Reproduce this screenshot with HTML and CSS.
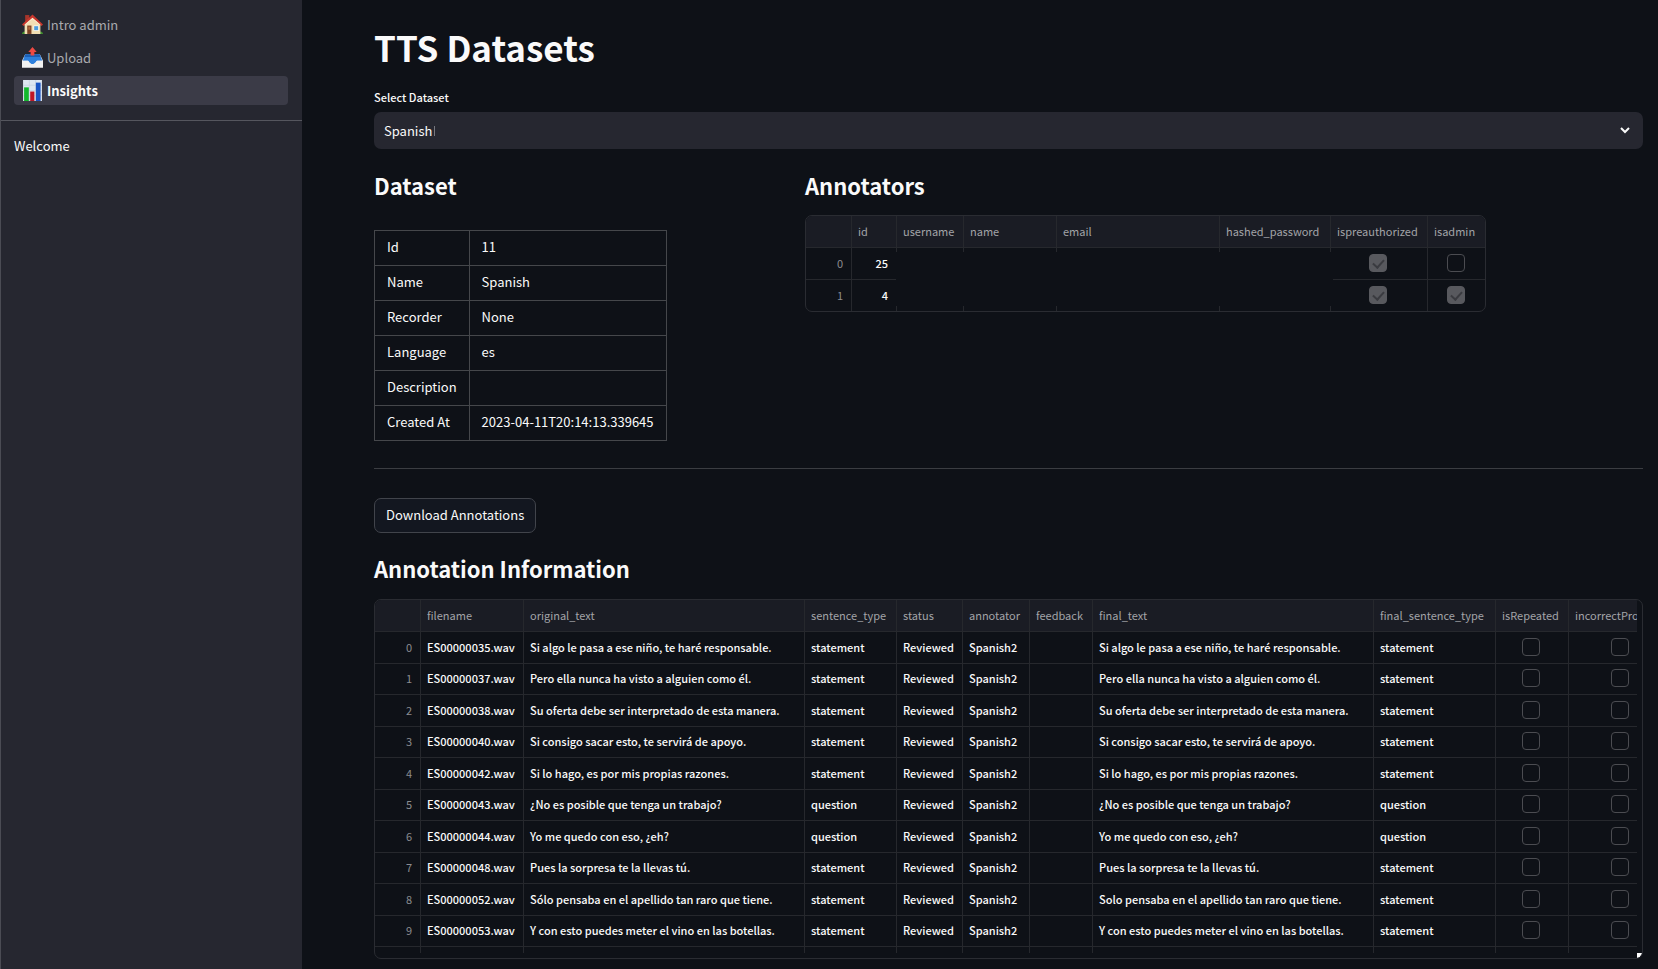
FILE: index.html
```html
<!DOCTYPE html>
<html lang="en">
  <head>
    <meta charset="UTF-8" />
    <meta name="viewport" content="width=device-width, initial-scale=1.0" />
    <title>TTS Datasets</title>
    <link rel="stylesheet" href="styles.css">
  </head>

  <body>
    <div class="app">
      <aside class="sidebar">
        <nav class="nav">
          <a class="nav-link" href="#intro">
            <svg class="nav-icon" viewBox="0 0 20 20">
              <path d="M0 19c0-2 2-3 4-2h12c2-1 4 0 4 2z" fill="#3f8f2e" />
              <path d="M3 1h4v7H3z" fill="#a5352b" />
              <path d="M2.500 9.500 10 2.500l7.500 7V19h-15z" fill="#f2dfb4" />
              <path d="M10 .5 0 10l1.500 1.500L10 4l8.500 7.500L20 10z" fill="#c8372d" />
              <path d="M10 3.500 2.500 10v1L10 4.800l7.500 6.200v-1z" fill="#fff3d6" />
              <path d="M5 11h4v8H5z" fill="#7b3f22" />
              <path d="M6 12h2v3H6z" fill="#b26b3f" />
              <path d="M11 11h5v5h-5z" fill="#fff" />
              <path d="M11.600 11.600h3.800v3.800h-3.800z" fill="#4d9ddb" />
            </svg>
            <span>Intro admin</span>
          </a>
          <a class="nav-link" href="#upload">
            <svg class="nav-icon" viewBox="0 0 20 20">
              <path d="M3 7h14l3 6v6.500H0V13z" fill="#e9eaec" />
              <path d="M3.200 7h13.600l2.500 6h-5c-.8 0-1.300 3.200-4.300 3.200S6.500 13 5.700 13h-5z" fill="#2f80dc" />
              <path d="M3.200 7h13.600l1 2.500H2.200z" fill="#1c5fb5" />
              <path d="M0 13h5.700c.8 0 1.300 3.200 4.300 3.200s3.500-3.200 4.300-3.200H20v6.500H0z" fill="#f1f1f1" />
              <path d="M10 0l4 4.800h-2.200V8H8.200V4.800H6z" fill="#f04a44" />
            </svg>
            <span>Upload</span>
          </a>
          <a class="nav-link active" href="#insights">
            <svg class="nav-icon" viewBox="0 0 20 20">
              <path d="M1 0h18v20H1z" fill="#dfe7f1" />
              <path d="M1 5h18M1 10h18M1 15h18M7 0v20M13 0v20" stroke="#c3cfde" stroke-width=".6" />
              <path d="M2 7h4.500v13H2z" fill="#12b82c" />
              <path d="M7.800 11h4v9h-4z" fill="#c01626" />
              <path d="M13.200 2.500h4.500V20h-4.500z" fill="#1b55c4" />
            </svg>
            <span>Insights</span>
          </a>
        </nav>
        <p class="welcome">Welcome</p>
      </aside>

      <main class="main">
        <h1>TTS Datasets</h1>

        <label class="select-label" for="dataset">Select Dataset</label>
        <div class="select-box">
          <select id="dataset">
            <option>Spanish</option>
          </select>
          <span class="caret"></span>
          <svg class="chevron" viewBox="0 0 12 12">
            <path d="M2 4l4 4 4-4" fill="none" stroke="#fafafa" stroke-width="2" />
          </svg>
        </div>

        <div class="columns">
          <section>
            <h3>Dataset</h3>
            <table class="info">
              <tr><td>Id</td><td>11</td></tr>
              <tr><td>Name</td><td>Spanish</td></tr>
              <tr><td>Recorder</td><td>None</td></tr>
              <tr><td>Language</td><td>es</td></tr>
              <tr><td>Description</td><td></td></tr>
              <tr><td>Created At</td><td>2023-04-11T20:14:13.339645</td></tr>
            </table>
          </section>

          <section>
            <h3>Annotators</h3>
            <div class="frame frame-fit">
              <table class="grid annotators">
                <colgroup>
                  <col class="c-index"><col class="c-id"><col class="c-username"><col class="c-name">
                  <col class="c-email"><col class="c-password"><col class="c-preauth"><col class="c-admin">
                </colgroup>
                <thead>
                  <tr>
                    <th></th><th>id</th><th>username</th><th>name</th><th>email</th>
                    <th>hashed_password</th><th>ispreauthorized</th><th>isadmin</th>
                  </tr>
                </thead>
                <tbody>
                  <tr>
                    <td class="index">0</td><td class="num">25</td><td></td><td></td><td></td><td></td>
                    <td class="check"><input type="checkbox" aria-label="ispreauthorized 0" checked></td>
                    <td class="check"><input type="checkbox" aria-label="isadmin 0"></td>
                  </tr>
                  <tr>
                    <td class="index">1</td><td class="num">4</td><td></td><td></td><td></td><td></td>
                    <td class="check"><input type="checkbox" aria-label="ispreauthorized 1" checked></td>
                    <td class="check"><input type="checkbox" aria-label="isadmin 1" checked></td>
                  </tr>
                </tbody>
              </table>
              <div class="private"></div>
            </div>
          </section>
        </div>

        <hr>

        <button class="download" type="button">Download Annotations</button>

        <h3>Annotation Information</h3>
        <div class="frame frame-scroll">
          <div class="viewport">
            <table class="grid annotations">
              <colgroup>
                <col class="c-index"><col class="c-file"><col class="c-text"><col class="c-type">
                <col class="c-status"><col class="c-annotator"><col class="c-feedback"><col class="c-text">
                <col class="c-final-type"><col class="c-repeated"><col class="c-incorrect">
              </colgroup>
              <thead>
                <tr>
                  <th></th><th>filename</th><th>original_text</th><th>sentence_type</th><th>status</th>
                  <th>annotator</th><th>feedback</th><th>final_text</th><th>final_sentence_type</th>
                  <th>isRepeated</th><th>incorrectPron</th>
                </tr>
              </thead>
              <tbody id="rows"></tbody>
            </table>
          </div>
          <span class="resize"></span>
        </div>
      </main>
    </div>

    <script>
      (function () {
        // file number, original text, type, final text (when it was edited)
        const annotations = [
          ['35', 'Si algo le pasa a ese niño, te haré responsable.', 'statement'],
          ['37', 'Pero ella nunca ha visto a alguien como él.', 'statement'],
          ['38', 'Su oferta debe ser interpretado de esta manera.', 'statement'],
          ['40', 'Si consigo sacar esto, te servirá de apoyo.', 'statement'],
          ['42', 'Si lo hago, es por mis propias razones.', 'statement'],
          ['43', '¿No es posible que tenga un trabajo?', 'question'],
          ['44', 'Yo me quedo con eso, ¿eh?', 'question'],
          ['48', 'Pues la sorpresa te la llevas tú.', 'statement'],
          ['52', 'Sólo pensaba en el apellido tan raro que tiene.', 'statement', 'Solo pensaba en el apellido tan raro que tiene.'],
          ['53', 'Y con esto puedes meter el vino en las botellas.', 'statement'],
        ];

        const rows = annotations.map(([file, text, type, finalText], i) => `
          <tr>
            <td class="index">${i}</td>
            <td>ES000000${file}.wav</td>
            <td>${text}</td>
            <td>${type}</td>
            <td>Reviewed</td>
            <td>Spanish2</td>
            <td></td>
            <td>${finalText || text}</td>
            <td>${type}</td>
            <td class="check"><input type="checkbox" aria-label="isRepeated ${i}"></td>
            <td class="check"><input type="checkbox" aria-label="incorrectPron ${i}"></td>
          </tr>`);

        // next row only peeks in at the bottom of the viewport
        rows.push('<tr>' + '<td></td>'.repeat(11) + '</tr>');
        document.querySelector('#rows').innerHTML = rows.join('');
      })();
    </script>
  </body>
</html>
```

FILE: styles.css
```css
* {
  box-sizing: border-box;
}

body {
  margin: 0;
  background: #0e1117;
  color: #fafafa;
  font-family: "Noto Sans CJK SC", "Noto Sans", sans-serif;
  font-size: 13px;
  font-weight: 400;
  line-height: 20px;
}

.app {
  display: flex;
  min-height: 100vh;
  overflow: hidden;
}

/* sidebar */

.sidebar {
  flex: 0 0 302px;
  background: #262730;
  border-left: 1px solid #4b4c54;
}

.nav {
  display: flex;
  flex-direction: column;
  gap: 4px;
  padding: 10px 14px 15px 13px;
  border-bottom: 1px solid #55565e;
}

.nav-link {
  display: flex;
  align-items: center;
  gap: 4px;
  height: 29px;
  padding: 0 8px;
  border-radius: 4px;
  color: #a9aaae;
  text-decoration: none;
}

.nav-link.active {
  background: #3b3b47;
  color: #fafafa;
  font-weight: 700;
}

.nav-icon {
  width: 21px;
  height: 21px;
}

.welcome {
  margin: 15px 13px;
}

/* main */

.main {
  flex: 1;
  min-width: 0;
  padding: 24px 15px 9px 72px;
}

h1 {
  margin: 0;
  font-size: 35px;
  font-weight: 700;
  line-height: 46px;
}

h3 {
  margin: 0;
  font-size: 22px;
  font-weight: 700;
  line-height: 30px;
}

.select-label {
  display: block;
  margin: 17px 0 5px;
  font-size: 11px;
  font-weight: 500;
}

.select-box {
  position: relative;
}

.select-box select {
  appearance: none;
  display: block;
  width: 100%;
  height: 37px;
  padding: 0 10px;
  border: 0;
  border-radius: 7px;
  background: #262730;
  color: inherit;
  font: inherit;
}

.caret {
  position: absolute;
  left: 60px;
  top: 14px;
  width: 1px;
  height: 10px;
  background: #77787f;
}

.chevron {
  position: absolute;
  right: 12px;
  top: 12px;
  width: 12px;
  height: 12px;
}

.columns {
  display: grid;
  grid-template-columns: 1fr 2fr;
  gap: 12px;
  margin-top: 21px;
}

.info {
  margin-top: 30px;
  border-collapse: collapse;
}

.info td {
  height: 35px;
  padding: 0 12px 2px;
  border: 1px solid #45474b;
}

hr {
  margin: 27px 0 29px;
  border: 0;
  border-top: 1px solid #3b3d42;
}

.download {
  display: block;
  height: 35px;
  margin-bottom: 20px;
  padding: 0 11px 1px;
  border: 1px solid #41444b;
  border-radius: 7px;
  background: #131720;
  color: inherit;
  font: inherit;
}

/* data grids */

.frame {
  position: relative;
  overflow: hidden;
  border: 1px solid #2a2c32;
  border-radius: 7px;
}

.frame-fit {
  width: fit-content;
  margin-top: 15px;
}

.frame-scroll {
  margin-top: 16px;
  padding: 0 5px 5px 0;
}

.viewport {
  height: 353px;
  overflow: hidden;
}

.grid {
  table-layout: fixed;
  border-collapse: separate;
  border-spacing: 0;
  font-size: 11px;
  font-weight: 500;
  white-space: nowrap;
}

.annotators {
  width: 679px;
}

.annotations {
  width: 1297px;
}

.grid th,
.grid td {
  height: 31px;
  padding: 0 6px 2px;
  border-right: 1px solid #26282d;
  border-bottom: 1px solid #26282d;
  line-height: 18px;
  text-align: left;
}

.grid th {
  height: 32px;
  background: #1a1c24;
  color: #a3a4a8;
  font-weight: 400;
}

.grid tr:nth-child(odd) td {
  height: 32px;
}

.grid th:last-child,
.grid td:last-child {
  border-right: 0;
}

.annotators tr:last-child td {
  border-bottom: 0;
}

.grid .index,
.grid .num {
  padding-right: 8px;
  text-align: right;
}

.grid .index {
  color: #8b8c90;
  font-weight: 400;
}

.grid .check {
  padding: 0 2px 2px 0;
}

.check input {
  appearance: none;
  display: block;
  width: 18px;
  height: 18px;
  margin: 0 auto;
  border: 1px solid #4b4c51;
  border-radius: 4px;
}

.check input:checked {
  border-color: #58595e;
  background: #58595e;
}

.check input:checked::after {
  content: "";
  display: block;
  width: 5px;
  height: 9px;
  margin: 2px 5px;
  border: solid #3a3b40;
  border-width: 0 2px 2px 0;
  transform: rotate(42deg);
}

/* hides the personal columns */
.private {
  position: absolute;
  left: 90px;
  top: 36px;
  width: 437px;
  height: 54px;
  background: #0e1117;
}

.resize {
  position: absolute;
  right: 0;
  bottom: 0;
  width: 5px;
  height: 5px;
  background: linear-gradient(135deg, #fff 65%, transparent 65%);
}

.c-index { width: 46px; }
.c-id { width: 45px; }
.c-username { width: 67px; }
.c-name { width: 93px; }
.c-email { width: 163px; }
.c-password { width: 111px; }
.c-preauth { width: 97px; }
.c-admin { width: 57px; }
.c-file { width: 103px; }
.c-text { width: 281px; }
.c-type { width: 92px; }
.c-status { width: 66px; }
.c-annotator { width: 67px; }
.c-feedback { width: 63px; }
.c-final-type { width: 122px; }
.c-repeated { width: 73px; }
.c-incorrect { width: 103px; }
```
